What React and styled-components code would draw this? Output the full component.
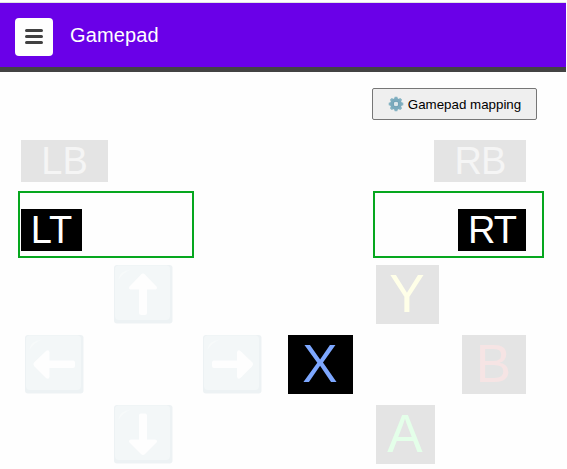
import React from "react";
import styled, { createGlobalStyle } from "styled-components";

const GlobalStyle = createGlobalStyle`
  * { box-sizing: border-box; }
  body {
    margin: 0;
    background: #fefefe;
    font-family: "Liberation Sans", Arial, sans-serif;
    overflow: hidden;
  }
`;

const Page = styled.div`
  width: 566px;
  height: 469px;
  border-top: 2px solid #fefefe;
`;

const Header = styled.header`
  display: flex;
  align-items: center;
  gap: 17px;
  height: 70px;
  padding: 0 15px;
  background: #6a00e8;
  border-top: 1px solid #dfe3e1;
  border-bottom: 5px solid #434343;
`;

const MenuButton = styled.button`
  display: grid;
  place-items: center;
  width: 38px;
  height: 38px;
  margin-top: 3px;
  padding: 0;
  border: 0;
  border-radius: 4px;
  background: #fefefe;
`;

const Title = styled.h1`
  margin: 0;
  font-size: 20px;
  line-height: 24px;
  font-weight: 400;
  letter-spacing: 0.15px;
  color: #fff;
`;

const Toolbar = styled.div`
  display: flex;
  justify-content: flex-end;
  padding: 16px 29px 0 0;
`;

const MappingButton = styled.button`
  display: flex;
  align-items: center;
  justify-content: center;
  gap: 4px;
  width: 165px;
  height: 32px;
  padding: 0;
  border: 1px solid #767676;
  border-radius: 2px;
  background: #efefef;
  font: 13.333px "Liberation Sans", Arial, sans-serif;
  color: #000;
`;

const Bumpers = styled.div`
  display: flex;
  justify-content: space-between;
  padding: 20px 40px 0 21px;
`;

const Triggers = styled.div`
  display: flex;
  justify-content: space-between;
  padding: 9px 22px 0 18px;
`;

const TriggerFrame = styled.div`
  display: flex;
  align-items: flex-end;
  justify-content: ${(p) => (p.$end ? "flex-end" : "flex-start")};
  width: ${(p) => p.$width}px;
  height: 67px;
  padding: ${(p) => (p.$end ? "0 16px 5px 0" : "0 0 5px 1px")};
  border: 2px solid #06a71e;
`;

const Key = styled.div`
  display: flex;
  align-items: center;
  justify-content: center;
  width: ${(p) => p.$width}px;
  height: 42px;
  background: #000;
  color: #fff;
  font-size: 38px;
  line-height: 42px;
  letter-spacing: ${(p) => p.$spacing || 0}px;
  white-space: nowrap;
`;

const BumperKey = styled(Key)`
  background: #e4e4e4;
  color: #f5f5f5;
`;

const FaceKey = styled(Key)`
  height: 59px;
  padding-right: 1px;
  font-size: 53px;
  line-height: 57px;
  padding-bottom: 2px;
  background: ${(p) => (p.$pressed ? "#000" : "#e4e4e4")};
  color: ${(p) => p.$color};
`;

const Pads = styled.div`
  display: flex;
  gap: 27px;
  padding: 7px 0 0 25px;
`;

const Cluster = styled.div`
  display: grid;
  grid-template-columns: ${(p) => p.$columns};
  grid-template-rows: repeat(3, 59px);
  grid-template-areas: ". top ." "left . right" ". bottom .";
  row-gap: 11px;
`;

const Slot = styled.div`
  grid-area: ${(p) => p.$area};
`;

const ArrowSvg = styled.svg`
  display: block;
  width: 59px;
  height: 59px;
`;

const MenuIcon = () => (
  <svg width="20" height="18" viewBox="0 0 20 18">
    <path d="M2.5 2.5H17.5M2.5 8.5H17.5M2.5 14.5H17.5" stroke="#414141" strokeWidth="3" strokeLinecap="round" />
  </svg>
);

const teeth = [0, 45, 90, 135, 180, 225, 270, 315];

const GearIcon = () => (
  <svg width="16" height="16" viewBox="0 0 16 16">
    <g fill="#86b3c3">
      {teeth.map((a) => (
        <path key={a} d="M5.900 3.400L6.700 .7H9.300L10.100 3.400Z" transform={`rotate(${a} 8 8)`} />
      ))}
    </g>
    <circle cx="8" cy="8" r="4" fill="none" stroke="#7aaabd" strokeWidth="3.400" />
    <circle cx="8" cy="8" r="2.600" fill="none" stroke="#669bb0" strokeWidth="0.800" />
    <circle cx="8" cy="8" r="2.200" fill="#dce6ea" />
  </svg>
);

const arrowPaths = {
  top: "M27 9.500Q29 7.500 31 9.500L42.500 21.500Q44 24 41 24.500H33V48Q33 50 31 50H27.500Q25 50 25 48V24.500H17Q14 24 15.500 21.500Z",
  bottom: "M25 16V10Q25 8.500 27 8.500H31Q33 8.500 33 10.500V34.500H41Q44 35 42.500 37.500L31 49Q29 51 27 49L15.500 37.500Q14 35 17 34.500H25Z",
  left: "M9.500 27L21 16Q24 14 24.500 17.500V25.500H48Q50 25.500 50 27.500V31Q50 33 48 33H24.500V41.500Q24 45 21 43L9.500 31.500Q7.500 29 9.500 27Z",
  right: "M49 27L37.500 16Q34.500 14 34 17.500V25.500H11Q9 25.500 9 27.500V31Q9 33 11 33H34V41.500Q34.500 45 37.500 43L49 31.500Q51 29 49 27Z",
};

const DirectionKey = ({ area }) => (
  <Slot $area={area}>
    <ArrowSvg viewBox="0 0 59 59">
      <rect x="0" y="0" width="58.500" height="58.500" rx="3" fill="#edf2f4" />
      <rect x="1" y="0.500" width="55" height="54.500" rx="4" fill="#f3f7f8" />
      <path d="M4.500 15Q5 6 17 4.500Q9 7.500 4.500 15Z" fill="#f7fafa" />
      <path d={arrowPaths[area]} fill="#fefefe" />
    </ArrowSvg>
  </Slot>
);

const faceKeys = [
  { label: "Y", area: "top", width: 63, color: "#ffffe8" },
  { label: "X", area: "left", width: 65, color: "#7da7ff", pressed: true },
  { label: "B", area: "right", width: 64, color: "#f6e4e4" },
  { label: "A", area: "bottom", width: 59, color: "#e4ffe9" },
];

export default function App() {
  return (
    <>
      <GlobalStyle />
      <Page>
        <Header>
          <MenuButton aria-label="Menu"><MenuIcon /></MenuButton>
          <Title>Gamepad</Title>
        </Header>
        <Toolbar>
          <MappingButton><GearIcon />Gamepad mapping</MappingButton>
        </Toolbar>
        <Bumpers>
          <BumperKey $width={87}>LB</BumperKey>
          <BumperKey $width={92} $spacing={-1}>RB</BumperKey>
        </Bumpers>
        <Triggers>
          <TriggerFrame $width={176}><Key $width={61}>LT</Key></TriggerFrame>
          <TriggerFrame $width={171} $end><Key $width={68} $spacing={-1}>RT</Key></TriggerFrame>
        </Triggers>
        <Pads>
          <Cluster $columns="89px 89px 58px">
            {["top", "left", "right", "bottom"].map((area) => (
              <DirectionKey key={area} area={area} />
            ))}
          </Cluster>
          <Cluster $columns="88px 86px 64px">
            {faceKeys.map((k) => (
              <Slot key={k.label} $area={k.area}>
                <FaceKey $width={k.width} $color={k.color} $pressed={k.pressed}>{k.label}</FaceKey>
              </Slot>
            ))}
          </Cluster>
        </Pads>
      </Page>
    </>
  );
}
